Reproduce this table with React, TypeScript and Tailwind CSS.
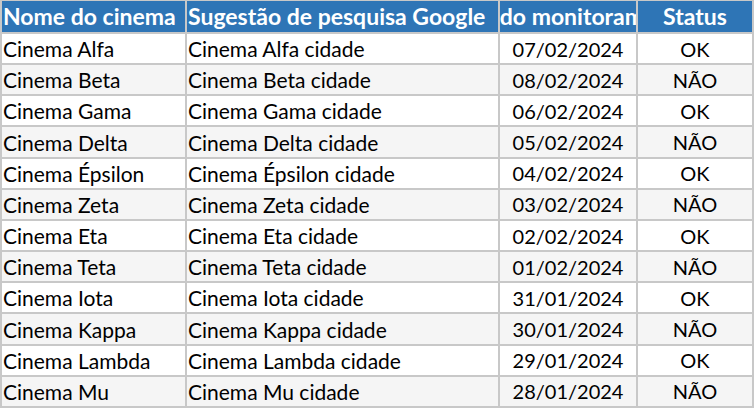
const rows = [
  { name: 'Cinema Alfa', date: '07/02/2024', status: 'OK' },
  { name: 'Cinema Beta', date: '08/02/2024', status: 'NÃO' },
  { name: 'Cinema Gama', date: '06/02/2024', status: 'OK' },
  { name: 'Cinema Delta', date: '05/02/2024', status: 'NÃO' },
  { name: 'Cinema Épsilon', date: '04/02/2024', status: 'OK' },
  { name: 'Cinema Zeta', date: '03/02/2024', status: 'NÃO' },
  { name: 'Cinema Eta', date: '02/02/2024', status: 'OK' },
  { name: 'Cinema Teta', date: '01/02/2024', status: 'NÃO' },
  { name: 'Cinema Iota', date: '31/01/2024', status: 'OK' },
  { name: 'Cinema Kappa', date: '30/01/2024', status: 'NÃO' },
  { name: 'Cinema Lambda', date: '29/01/2024', status: 'OK' },
  { name: 'Cinema Mu', date: '28/01/2024', status: 'NÃO' },
];

export default function App() {
  return (
    <div className="w-[754px] h-[408px] bg-[#c8c8c8] pt-[1px] px-[2px] pb-[2px] font-['Lato',sans-serif] text-[21px] leading-none text-black">
      <div className="grid h-full grid-cols-[183px_311px_136px_114px] grid-rows-[31px_repeat(12,minmax(0,1fr))] gap-[2px]">
        {/* header */}
        <div className="bg-[#2e75b6] text-white font-bold text-[23px] flex items-center px-[1px] overflow-hidden whitespace-nowrap">
          Nome do cinema
        </div>
        <div className="bg-[#2e75b6] text-white font-bold text-[23px] flex items-center px-[1px] overflow-hidden whitespace-nowrap">
          Sugestão de pesquisa Google
        </div>
        <div className="bg-[#2e75b6] text-white font-bold text-[23px] flex items-center justify-center overflow-hidden whitespace-nowrap">
          Data do monitoramento
        </div>
        <div className="bg-[#2e75b6] text-white font-bold text-[23px] flex items-center justify-center overflow-hidden whitespace-nowrap">
          Status
        </div>

        {rows.map((r, i) => {
          const bg = i % 2 === 0 ? 'bg-white' : 'bg-[#f5f5f5]';
          return [
            <div key={r.name + 'a'} className={`${bg} flex items-center px-[1px] whitespace-nowrap overflow-hidden`}>
              {r.name}
            </div>,
            <div key={r.name + 'b'} className={`${bg} flex items-center px-[1px] whitespace-nowrap overflow-hidden`}>
              {r.name} cidade
            </div>,
            <div key={r.name + 'c'} className={`${bg} flex items-center justify-center whitespace-nowrap text-[20px]`}>
              {r.date}
            </div>,
            <div key={r.name + 'd'} className={`${bg} flex items-center justify-center whitespace-nowrap text-[20px]`}>
              {r.status}
            </div>,
          ];
        })}
      </div>
    </div>
  );
}
